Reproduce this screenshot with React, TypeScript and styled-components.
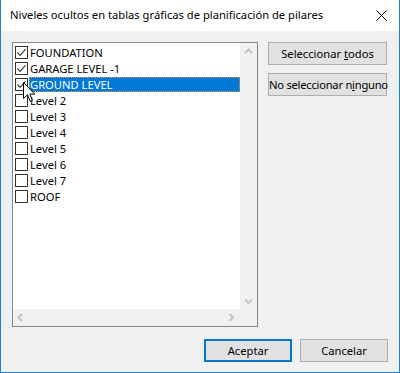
import React from "react";
import styled, { createGlobalStyle } from "styled-components";

const GlobalStyle = createGlobalStyle`
  html, body {
    margin: 0;
    padding: 0;
    background: #ffffff;
  }
  body {
    font-family: "Segoe UI", "Noto Sans", sans-serif;
    font-size: 11px;
    color: #000000;
  }
`;

const Window = styled.div`
  position: relative;
  width: 400px;
  height: 373px;
  box-sizing: border-box;
  display: flex;
  flex-direction: column;
  background: #f0f0f0;
  border: 1px solid #1883d7;
  border-top: none;
  overflow: hidden;
`;

const TitleBar = styled.div`
  height: 31px;
  flex: none;
  display: flex;
  align-items: center;
  justify-content: space-between;
  background: #ffffff;
  padding: 0 10px 0 9px;
`;

const Title = styled.span`
  font-size: 11.2px;
  line-height: 16px;
  padding-bottom: 1px;
`;

const CloseButton = styled.div`
  width: 14px;
  height: 14px;
  display: flex;
  align-items: center;
  justify-content: center;
  margin-right: 1px;
`;

const Content = styled.div`
  flex: 1;
  display: flex;
  flex-direction: column;
  padding: 11px 11px 0 11px;
`;

const MainRow = styled.div`
  display: flex;
  gap: 10px;
`;

const ListBox = styled.div`
  width: 246px;
  height: 285px;
  box-sizing: border-box;
  border: 1px solid #828790;
  background: #ffffff;
  display: grid;
  grid-template-columns: 1fr 17px;
  grid-template-rows: 1fr 17px;
`;

const ItemList = styled.div`
  padding-top: 1px;
  padding-left: 2px;
  display: flex;
  flex-direction: column;
`;

const Item = styled.div`
  height: 16px;
  display: flex;
  align-items: center;
`;

const Box = styled.div`
  width: 13px;
  height: 13px;
  box-sizing: border-box;
  border: 1px solid #333333;
  background: #ffffff;
  flex: none;
  display: flex;
  align-items: center;
  justify-content: center;
`;

const Label = styled.span<{ $selected?: boolean }>`
  flex: ${(p) => (p.$selected ? 1 : "none")};
  height: 15px;
  line-height: 13px;
  box-sizing: border-box;
  padding: 0 1px 0 0;
  margin-left: 1px;
  white-space: nowrap;
  font-size: 11.2px;
  background: ${(p) => (p.$selected ? "#0078d7" : "transparent")};
  color: ${(p) => (p.$selected ? "#ffffff" : "#000000")};
  border: 1px ${(p) => (p.$selected ? "dotted #e8952f" : "solid transparent")};
`;

const VScroll = styled.div`
  background: #f0f0f0;
  display: flex;
  flex-direction: column;
  justify-content: space-between;
  align-items: center;
  padding: 5px 0 4px;
`;

const HScroll = styled.div`
  background: #f0f0f0;
  display: flex;
  justify-content: space-between;
  align-items: center;
  padding: 0 5px 0 4px;
`;

const Corner = styled.div`
  background: #f0f0f0;
`;

const ButtonColumn = styled.div`
  display: flex;
  flex-direction: column;
  gap: 8px;
`;

const Button = styled.button<{ $width: number; $default?: boolean; $tight?: boolean }>`
  width: ${(p) => p.$width}px;
  height: 23px;
  box-sizing: border-box;
  margin: 0;
  padding: 0;
  white-space: nowrap;
  font-family: "Segoe UI", "Noto Sans", sans-serif;
  font-size: 11.2px;
  letter-spacing: ${(p) => (p.$tight ? "-0.25px" : "0")};
  color: #000000;
  background: #e1e1e1;
  border: ${(p) => (p.$default ? "2px solid #0078d7" : "1px solid #adadad")};
  border-radius: 0;
`;

const Footer = styled.div`
  display: flex;
  justify-content: flex-end;
  gap: 8px;
  margin-top: 12px;
`;

const Cursor = styled.svg`
  position: absolute;
  left: 22px;
  top: 82px;
`;

const levels = [
  { name: "FOUNDATION", checked: true },
  { name: "GARAGE LEVEL -1", checked: true },
  { name: "GROUND LEVEL", checked: true, selected: true },
  { name: "Level 2" },
  { name: "Level 3" },
  { name: "Level 4" },
  { name: "Level 5" },
  { name: "Level 6" },
  { name: "Level 7" },
  { name: "ROOF" },
];

const Check = () => (
  <svg width="11" height="11" viewBox="0 0 11 11">
    <path d="M1.5 5.5 L4.2 8.3 L9.6 2.2" fill="none" stroke="#444" strokeWidth="1.2" />
  </svg>
);

const Chevron = ({ dir }: { dir: "up" | "down" | "left" | "right" }) => {
  const d = {
    up: "M1 5 L4.5 1.5 L8 5",
    down: "M1 1.5 L4.5 5 L8 1.5",
    left: "M5 1 L1.5 4.5 L5 8",
    right: "M1.5 1 L5 4.5 L1.5 8",
  }[dir];
  const horiz = dir === "left" || dir === "right";
  return (
    <svg width={horiz ? 7 : 9} height={horiz ? 9 : 7} viewBox={horiz ? "0 0 7 9" : "0 0 9 7"}>
      <path d={d} fill="none" stroke="#c2c2c2" strokeWidth="2" />
    </svg>
  );
};

export default function App() {
  return (
    <>
      <GlobalStyle />
      <Window>
        <TitleBar>
          <Title>Niveles ocultos en tablas gráficas de planificación de pilares</Title>
          <CloseButton>
            <svg width="11" height="11" viewBox="0 0 11 11">
              <path d="M0.5 0.5 L10.5 10.5 M10.5 0.5 L0.5 10.5" stroke="#000" strokeWidth="1" />
            </svg>
          </CloseButton>
        </TitleBar>
        <Content>
          <MainRow>
            <ListBox>
              <ItemList>
                {levels.map((l) => (
                  <Item key={l.name}>
                    <Box>{l.checked && <Check />}</Box>
                    <Label $selected={l.selected}>{l.name}</Label>
                  </Item>
                ))}
              </ItemList>
              <VScroll>
                <Chevron dir="up" />
                <Chevron dir="down" />
              </VScroll>
              <HScroll>
                <Chevron dir="left" />
                <Chevron dir="right" />
              </HScroll>
              <Corner />
            </ListBox>
            <ButtonColumn>
              <Button $width={119}>
                Seleccionar <u>t</u>odos
              </Button>
              <Button $width={119} $tight>
                No seleccionar n<u>i</u>nguno
              </Button>
            </ButtonColumn>
          </MainRow>
          <Footer>
            <Button $width={88} $default>
              Aceptar
            </Button>
            <Button $width={88}>Cancelar</Button>
          </Footer>
        </Content>
        <Cursor width="13" height="21" viewBox="0 0 13 21">
          <path
            d="M0.5 0.5 L0.5 16.5 L4.5 12.8 L7.2 19.3 L9.4 18.4 L6.8 12.1 L11.8 12.1 Z"
            fill="#ffffff"
            stroke="#000000"
            strokeWidth="1"
            strokeLinejoin="miter"
          />
        </Cursor>
      </Window>
    </>
  );
}
